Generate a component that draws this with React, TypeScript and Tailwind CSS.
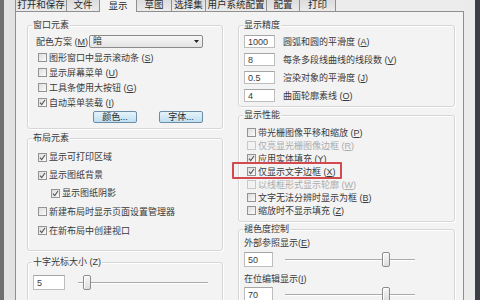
import React from "react";

const FONT = "font-['Liberation_Sans','Noto_Sans_CJK_SC',sans-serif]";

function K({ c }: { c: string }) {
  if (!c) return null;
  return (
    <span>
      {" ("}
      <span className="underline underline-offset-[1px]">{c}</span>
      {")"}
    </span>
  );
}

function Box({ checked, disabled }: { checked?: boolean; disabled?: boolean }) {
  return (
    <span
      className={
        "w-[9px] h-[9px] border flex items-center justify-center shrink-0 " +
        (disabled
          ? "border-[#c8c8c8] bg-[#f2f2f2]"
          : "border-[#939393] bg-gradient-to-br from-[#dedede] to-[#fafafa]")
      }
    >
      {checked && (
        <svg width="7" height="7" viewBox="0 0 7 7">
          <path d="M1 3.6 L2.7 5.6 L6 1" stroke="#555555" strokeWidth="1.1" fill="none" />
        </svg>
      )}
    </span>
  );
}

function Check({
  label,
  k,
  checked,
  disabled,
  h,
  className,
}: {
  label: string;
  k: string;
  checked?: boolean;
  disabled?: boolean;
  h: string;
  className?: string;
}) {
  return (
    <div className={"flex items-center gap-[2px] " + h + " " + (className || "")}>
      <Box checked={checked} disabled={disabled} />
      <span className={disabled ? "text-[#ababab]" : "text-[#3a3a3a]"}>
        {label}
        <K c={k} />
      </span>
    </div>
  );
}

function Group({
  title,
  className,
  children,
}: {
  title: string;
  className: string;
  children?: React.ReactNode;
}) {
  return (
    <div
      className={
        "border border-[#d6d6d6] rounded-[3px] shadow-[inset_1px_1px_0_#ffffff,1px_1px_0_#ffffff] flex flex-col " +
        className
      }
    >
      <span className="-mt-[7px] ml-[4px] px-[1px] w-fit leading-[12px] bg-[#f3f3f3] text-[#3a3a3a]">
        {title}
      </span>
      {children}
    </div>
  );
}

function Input({ v, w }: { v: string; w: string }) {
  return (
    <div
      className={
        "h-full bg-white border border-[#bdbdbd] border-t-[#a5a5a5] flex items-center pl-[3px] text-[9px] text-[#3a3a3a] " +
        w
      }
    >
      {v}
    </div>
  );
}

function Slider({ left, right }: { left: string; right: string }) {
  return (
    <div className="flex items-center h-[15px]">
      <div className={"h-[2px] border-t border-[#ababab] border-b border-b-white " + left} />
      <div className="w-[8px] h-[15px] rounded-[2px] border border-[#8c8c8c] bg-gradient-to-b from-[#f7f7f7] to-[#dedede] shadow-[inset_1px_1px_0_#ffffff]" />
      <div className={"h-[2px] border-t border-[#ababab] border-b border-b-white " + right} />
    </div>
  );
}

const tabs: { t: string; w: string; sel?: boolean }[] = [
  { t: "打开和保存", w: "w-[52px]" },
  { t: "文件", w: "w-[33px]" },
  { t: "显示", w: "w-[37px]", sel: true },
  { t: "草图", w: "w-[35px]" },
  { t: "选择集", w: "w-[34px]" },
  { t: "用户系统配置", w: "w-[61px]" },
  { t: "配置", w: "w-[33px]" },
  { t: "打印", w: "w-[36px]" },
];

export default function App() {
  return (
    <div
      className={
        "w-[480px] h-[300px] overflow-hidden flex bg-[#ececec] text-[9px] leading-[12px] text-[#3a3a3a] " +
        FONT
      }
    >
      <div className="w-[4px] h-full bg-[#6e6e6e] shrink-0" />
      <div className="w-[11px] h-full bg-[#e2e2e2] shrink-0" />
      <div className="w-[449px] h-full flex flex-col shrink-0">
        {/* tabs */}
        <div className="h-[12px] flex shrink-0">
          {tabs.map((tb, i) => (
            <div
              key={tb.t}
              className={
                "h-full flex items-end justify-center pb-[1px] border-r border-[#8f8f8f] " +
                (i === 0 ? "border-l " : "") +
                (tb.sel
                  ? "bg-[#f3f3f3] "
                  : "border-b bg-gradient-to-b from-[#dcdcdc] to-[#ebebeb] ") +
                tb.w
              }
            >
              <span className="leading-[10px] text-[9.5px] text-[#2a2a2a]">{tb.t}</span>
            </div>
          ))}
          <div className="flex-1 h-full border-b border-[#8f8f8f]" />
        </div>
        {/* panel */}
        <div className="flex-1 flex border-l border-r border-[#8f8f8f] bg-[#f3f3f3]">
          {/* left column */}
          <div className="ml-[11px] w-[196px] flex flex-col shrink-0">
            <Group title="窗口元素" className="mt-[13px] h-[104px] shrink-0">
              <div className="mt-[4px] h-[13px] flex items-center pl-[8px]">
                <span className="w-[53px] shrink-0">
                  配色方案
                  <K c="M" />
                </span>
                <div className="w-[114px] h-[13px] rounded-[2px] border border-[#8a8a8a] bg-gradient-to-b from-[#f7f7f7] to-[#e3e3e3] flex">
                  <span className="flex-1 pl-[3px] leading-[11px] text-[#2a2a2a]">暗</span>
                  <span className="w-[11px] flex items-center justify-center">
                    <svg width="5" height="3" viewBox="0 0 5 3">
                      <path d="M0 0 L5 0 L2.5 3 Z" fill="#222" />
                    </svg>
                  </span>
                </div>
              </div>
              <div className="mt-[2px] pl-[10px] flex flex-col">
                <Check label="图形窗口中显示滚动条" k="S" h="h-[15px]" />
                <Check label="显示屏幕菜单" k="U" h="h-[15px]" />
                <Check label="工具条使用大按钮" k="G" h="h-[15px]" />
                <Check label="自动菜单装载" k="I" checked h="h-[15px]" />
              </div>
              <div className="mt-[1px] h-[12px] flex pl-[65px] gap-[22px]">
                <div className="w-[44px] h-[12px] rounded-[2px] border border-[#6b8ea6] bg-gradient-to-b from-[#e4f3fb] to-[#bfdff0] flex items-center justify-center leading-[10px] text-[#2a2a2a]">
                  颜色...
                </div>
                <div className="w-[44px] h-[12px] rounded-[2px] border border-[#6b8ea6] bg-gradient-to-b from-[#e4f3fb] to-[#bfdff0] flex items-center justify-center leading-[10px] text-[#2a2a2a]">
                  字体...
                </div>
              </div>
            </Group>
            <Group title="布局元素" className="mt-[9px] h-[113px] shrink-0">
              <div className="mt-[4px] pl-[10px] flex flex-col">
                <Check label="显示可打印区域" k="" checked h="h-[18px]" />
                <Check label="显示图纸背景" k="" checked h="h-[18px]" />
                <Check label="显示图纸阴影" k="" checked h="h-[18px]" className="pl-[13px]" />
                <Check label="新建布局时显示页面设置管理器" k="" h="h-[19px]" />
                <Check label="在新布局中创建视口" k="" checked h="h-[19px]" />
              </div>
            </Group>
            <Group title="十字光标大小 (Z)" className="mt-[11px] h-[60px] shrink-0">
              <div className="mt-[7px] h-[15px] flex items-center pl-[5px] gap-[13px]">
                <Input v="5" w="w-[32px]" />
                <Slider left="w-[5px]" right="w-[117px]" />
              </div>
            </Group>
          </div>
          {/* right column */}
          <div className="ml-[15px] w-[217px] flex flex-col shrink-0">
            <Group title="显示精度" className="mt-[13px] h-[82px] shrink-0">
              <div className="mt-[4px] flex flex-col gap-[5px] pl-[5px]">
                {[
                  ["1000", "圆弧和圆的平滑度", "A"],
                  ["8", "每条多段线曲线的线段数", "V"],
                  ["0.5", "渲染对象的平滑度", "J"],
                  ["4", "曲面轮廓素线", "O"],
                ].map(([v, l, k]) => (
                  <div key={l} className="h-[13px] flex items-center gap-[8px]">
                    <Input v={v} w="w-[31px]" />
                    <span>
                      {l}
                      <K c={k} />
                    </span>
                  </div>
                ))}
              </div>
            </Group>
            <Group title="显示性能" className="mt-[8px] h-[107px] shrink-0">
              <div className="mt-[5px] pl-[8px] flex flex-col">
                <Check label="带光栅图像平移和缩放" k="P" h="h-[13px]" />
                <Check label="仅亮显光栅图像边框" k="R" disabled h="h-[13px]" />
                <Check label="应用实体填充" k="Y" checked h="h-[13px]" />
                <div className="relative">
                  <Check label="仅显示文字边框" k="X" checked h="h-[13px]" />
                  <div className="absolute -left-[15px] -top-[3px] w-[110px] h-[17px] border-[2px] border-[#d24a4d] rounded-[1px]" />
                </div>
                <Check label="以线框形式显示轮廓" k="W" disabled h="h-[13px]" />
                <Check label="文字无法分辨时显示为框" k="B" h="h-[13px]" />
                <Check label="缩放时不显示填充" k="Z" h="h-[13px]" />
              </div>
            </Group>
            <Group title="褪色度控制" className="mt-[7px] h-[90px] shrink-0">
              <div className="mt-[2px] h-[12px] flex items-center pl-[5px]">
                外部参照显示
                <K c="E" />
              </div>
              <div className="mt-[3px] h-[15px] flex items-center pl-[5px] gap-[12px]">
                <Input v="50" w="w-[29px]" />
                <Slider left="w-[97px]" right="w-[25px]" />
              </div>
              <div className="mt-[6px] h-[12px] flex items-center pl-[5px]">
                在位编辑显示
                <K c="I" />
              </div>
              <div className="mt-[2px] h-[15px] flex items-center pl-[5px] gap-[12px]">
                <Input v="70" w="w-[29px]" />
                <Slider left="w-[97px]" right="w-[25px]" />
              </div>
            </Group>
          </div>
        </div>
      </div>
      <div className="w-[11px] h-full bg-[#ebebeb] shrink-0" />
      <div className="w-[5px] h-full bg-[#3c4046] shrink-0" />
    </div>
  );
}
